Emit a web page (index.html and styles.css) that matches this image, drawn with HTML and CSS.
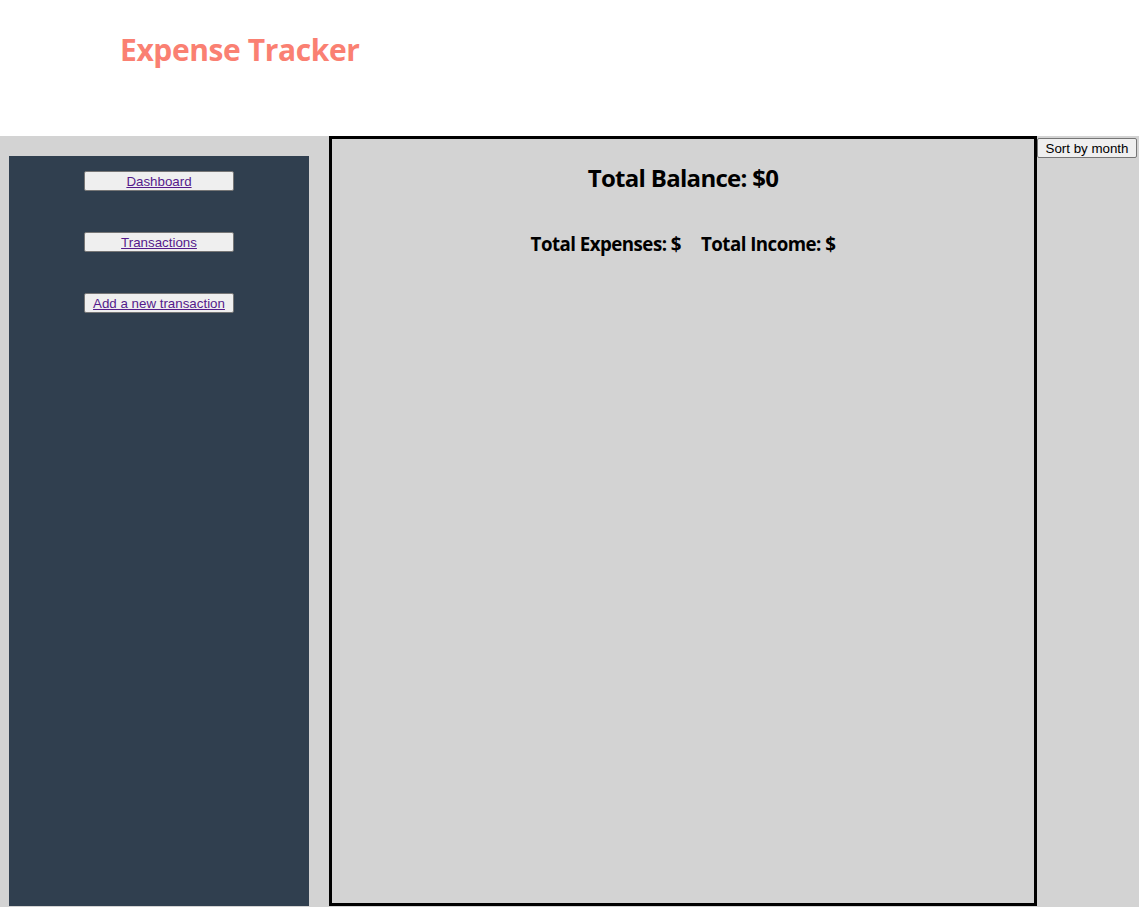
FILE: index.html
```html
<!DOCTYPE html>
<html>
<head>
<meta charset="utf-8">
<title>Expense Tracker</title>
<link rel="stylesheet" href="styles.css">
</head>
<body>
<header class="header">
  <h1 class="title">Expense Tracker</h1>
</header>
<div class="layout">
  <nav class="sidebar">
    <button class="nav-btn"><a href="#" class="nav-link">Dashboard</a></button>
    <button class="nav-btn"><a href="#" class="nav-link">Transactions</a></button>
    <button class="nav-btn"><a href="#" class="nav-link">Add a new transaction</a></button>
  </nav>
  <main class="main">
    <h2 class="balance">Total Balance: $0</h2>
    <div class="totals">
      <h3 class="total">Total Expenses: $</h3>
      <h3 class="total">Total Income: $</h3>
    </div>
  </main>
  <button class="sort-btn">Sort by month</button>
</div>
</body>
</html>
```

FILE: styles.css
```css
* { box-sizing: border-box; }

body {
  margin: 0;
  font-family: "Open Sans", "Noto Sans", sans-serif;
  background: #ffffff;
}

.header {
  height: 136px;
  padding-left: 120px;
  padding-top: 28px;
}

.title {
  margin: 0;
  font-size: 30px;
  font-weight: 700;
  letter-spacing: -0.4px;
  color: #fa8072;
  line-height: 44px;
}

.layout {
  display: flex;
  align-items: flex-start;
  height: 771px;
  background: #d3d3d3;
}

.sidebar {
  width: 300px;
  height: 750px;
  margin: 20px 20px 0 9px;
  padding-top: 15px;
  background: #303f4f;
  display: flex;
  flex-direction: column;
  align-items: center;
  gap: 41px;
}

.nav-btn {
  width: 150px;
  height: 20px;
  padding: 0;
  background: #efefef;
  border: 1px solid #767676;
  border-radius: 2px;
  font-family: "Liberation Sans", Arial, sans-serif;
  font-size: 13.333px;
}

.nav-link {
  color: #551a8b;
  text-decoration: underline;
}

.main {
  width: 708px;
  height: 770px;
  border: 3px solid #000000;
  display: flex;
  flex-direction: column;
  align-items: center;
}

.balance {
  margin: 23px 0 0;
  font-size: 24px;
  font-weight: 700;
  letter-spacing: -0.7px;
  line-height: 32px;
}

.totals {
  display: flex;
  gap: 20px;
  margin-top: 37px;
}

.total {
  margin: 0;
  font-size: 18.72px;
  font-weight: 700;
  letter-spacing: -0.53px;
  line-height: 26px;
}

.sort-btn {
  margin-top: 2px;
  width: 100px;
  height: 20px;
  padding: 0;
  background: #efefef;
  border: 1px solid #767676;
  border-radius: 2px;
  font-family: "Liberation Sans", Arial, sans-serif;
  font-size: 13.333px;
  color: #000000;
}
```
